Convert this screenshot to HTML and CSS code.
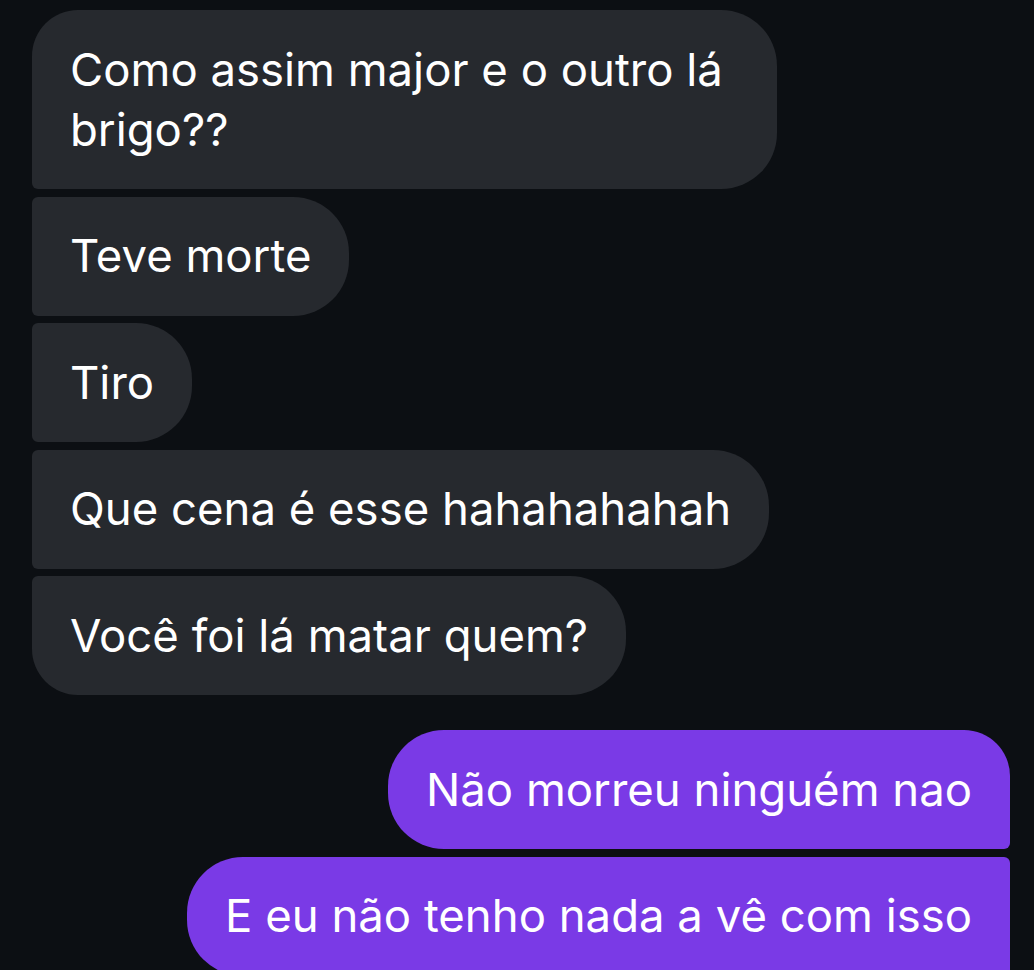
FILE: index.html
```html
<!DOCTYPE html>
<html lang="pt">
<head>
    <meta charset="UTF-8">
    <meta name="viewport" content="width=device-width, initial-scale=1.0">
    <title>Conversa</title>
    <link rel="stylesheet" href="styles.css">
</head>
<body>
    <div class="chat">
        <div class="grupo recebido">
            <div class="balao primeiro">Como assim major e o outro lá brigo??</div>
            <div class="balao">Teve morte</div>
            <div class="balao">Tiro</div>
            <div class="balao">Que cena é esse hahahahahah</div>
            <div class="balao ultimo">Você foi lá matar quem?</div>
        </div>
        <div class="grupo enviado">
            <div class="balao primeiro">Não morreu ninguém nao</div>
            <div class="balao">E eu não tenho nada a vê com isso</div>
        </div>
    </div>
</body>
</html>
```

FILE: styles.css
```css
html, body {
    margin: 0;
    padding: 0;
    background-color: #0c0f13;
    height: 100%;
    overflow: hidden;
}
.chat {
    display: flex;
    flex-direction: column;
    gap: 35px;
    padding: 10px 24px 0 32px;
    font-family: Inter, "Noto Sans", sans-serif;
    font-size: 45.5px;
    line-height: 60px;
    color: #fff;
}
.grupo {
    display: flex;
    flex-direction: column;
    gap: 7.5px;
}
.recebido {
    align-items: flex-start;
}
.enviado {
    align-items: flex-end;
}
.balao {
    padding: 29.5px 38px;
    white-space: nowrap;
}
.recebido .balao {
    background-color: #26292e;
    border-radius: 6px 56px 56px 6px;
}
.recebido .primeiro {
    border-top-left-radius: 46px;
    white-space: normal;
    max-width: 669px;
}
.recebido .ultimo {
    border-bottom-left-radius: 46px;
}
.enviado .balao {
    background-color: #7a3ae6;
    border-radius: 56px 6px 6px 56px;
}
.enviado .primeiro {
    border-top-right-radius: 46px;
}
```
